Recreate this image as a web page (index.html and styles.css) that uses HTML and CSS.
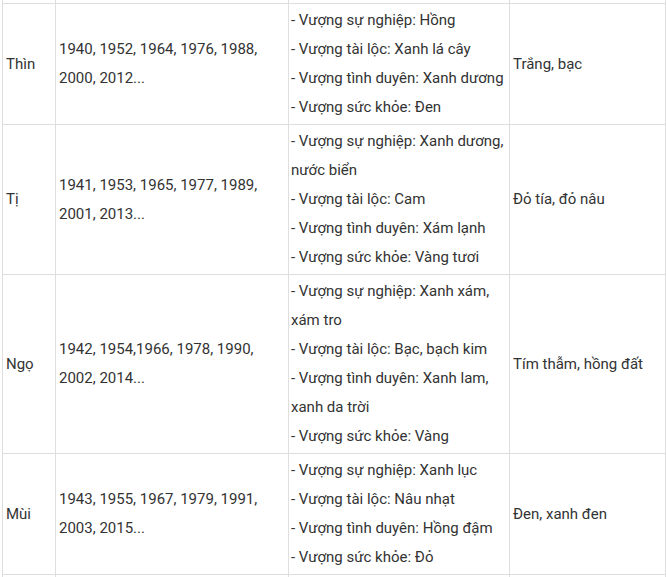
FILE: index.html
```html
<!DOCTYPE html>
<html lang="vi">
<head>
<meta charset="utf-8">
<link rel="stylesheet" href="styles.css">
</head>
<body>
<table class="colors">
  <colgroup>
    <col class="c1"><col class="c2"><col class="c3"><col class="c4">
  </colgroup>
  <tbody>
    <tr class="spacer top"><td></td><td></td><td></td><td></td></tr>
    <tr>
      <td>Thìn</td>
      <td>1940, 1952, 1964, 1976, 1988, 2000, 2012...</td>
      <td>
        <p>- Vượng sự nghiệp: Hồng</p>
        <p>- Vượng tài lộc: Xanh lá cây</p>
        <p>- Vượng tình duyên: Xanh dương</p>
        <p>- Vượng sức khỏe: Đen</p>
      </td>
      <td>Trắng, bạc</td>
    </tr>
    <tr>
      <td>Tị</td>
      <td>1941, 1953, 1965, 1977, 1989, 2001, 2013...</td>
      <td>
        <p>- Vượng sự nghiệp: Xanh dương, nước biển</p>
        <p>- Vượng tài lộc: Cam</p>
        <p>- Vượng tình duyên: Xám lạnh</p>
        <p>- Vượng sức khỏe: Vàng tươi</p>
      </td>
      <td>Đỏ tía, đỏ nâu</td>
    </tr>
    <tr>
      <td>Ngọ</td>
      <td>1942, 1954,1966, 1978, 1990, 2002, 2014...</td>
      <td>
        <p>- Vượng sự nghiệp: Xanh xám, xám tro</p>
        <p>- Vượng tài lộc: Bạc, bạch kim</p>
        <p>- Vượng tình duyên: Xanh lam, xanh da trời</p>
        <p>- Vượng sức khỏe: Vàng</p>
      </td>
      <td>Tím thẫm, hồng đất</td>
    </tr>
    <tr>
      <td>Mùi</td>
      <td>1943, 1955, 1967, 1979, 1991, 2003, 2015...</td>
      <td>
        <p>- Vượng sự nghiệp: Xanh lục</p>
        <p>- Vượng tài lộc: Nâu nhạt</p>
        <p>- Vượng tình duyên: Hồng đậm</p>
        <p>- Vượng sức khỏe: Đỏ</p>
      </td>
      <td>Đen, xanh đen</td>
    </tr>
    <tr class="spacer bottom"><td></td><td></td><td></td><td></td></tr>
  </tbody>
</table>
</body>
</html>
```

FILE: styles.css
```css
html, body {
  margin: 0;
  padding: 0;
  background: #ffffff;
}

body {
  font-family: Roboto, "Liberation Sans", Arial, sans-serif;
  font-size: 15px;
  color: #333333;
  padding-left: 2px;
}

.colors {
  border-collapse: collapse;
  table-layout: fixed;
  width: 663px;
}

.c1 { width: 53px; }
.c2 { width: 233px; }
.c3 { width: 221px; }
.c4 { width: 156px; }

.colors td {
  border: 1px solid #dedede;
  padding: 2px 3px 2px 3px;
  line-height: 29px;
  vertical-align: middle;
}

.colors td:nth-child(3) {
  padding-left: 2px;
  padding-right: 2px;
}

.colors p {
  margin: 0;
}

.spacer td {
  padding: 0;
  line-height: 0;
}

.spacer.top td {
  height: 3px;
  border-top: none;
}

.spacer.bottom td {
  height: 10px;
  border-bottom: none;
}
```
